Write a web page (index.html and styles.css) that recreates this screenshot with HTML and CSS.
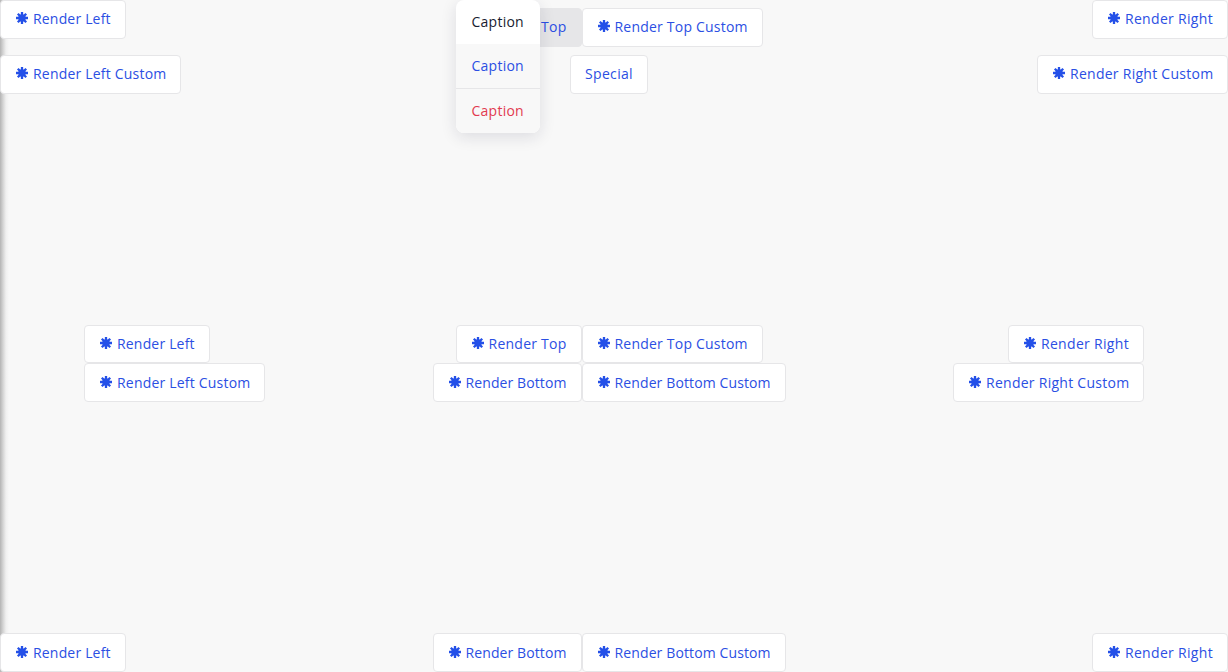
FILE: index.html
```
<!DOCTYPE html>
<html lang="en">
<head>
<meta charset="utf-8">
<title>Popover placement</title>
<link rel="stylesheet" href="styles.css">
</head>
<body>
<svg class="defs" aria-hidden="true">
  <symbol id="star" viewBox="0 0 12 12">
    <path d="M6 0v12M0 6h12M1.8 1.8l8.4 8.4M10.2 1.8l-8.4 8.4" fill="none" stroke="currentColor" stroke-width="2.3"/>
    <circle cx="6" cy="6" r="3.7" fill="currentColor"/>
  </symbol>
</svg>
<main class="page">
  <section class="row row-top">
    <div class="stack stack-spaced">
      <button class="btn left"><svg class="icon"><use href="#star"/></svg>Render Left</button>
      <button class="btn left-custom"><svg class="icon"><use href="#star"/></svg>Render Left Custom</button>
    </div>
    <div class="center">
      <div class="pair">
        <div class="anchor">
          <button class="btn btn-active top"><svg class="icon"><use href="#star"/></svg>Render Top</button>
          <div class="menu">
            <div class="item">Caption</div>
            <div class="item item-selected">Caption</div>
            <div class="item item-danger">Caption</div>
          </div>
        </div>
        <button class="btn top-custom"><svg class="icon"><use href="#star"/></svg>Render Top Custom</button>
      </div>
      <button class="btn special">Special</button>
    </div>
    <div class="stack stack-spaced stack-end">
      <button class="btn right"><svg class="icon"><use href="#star"/></svg>Render Right</button>
      <button class="btn right-custom"><svg class="icon"><use href="#star"/></svg>Render Right Custom</button>
    </div>
  </section>
  <section class="row row-inset">
    <div class="stack">
      <button class="btn left"><svg class="icon"><use href="#star"/></svg>Render Left</button>
      <button class="btn left-custom"><svg class="icon"><use href="#star"/></svg>Render Left Custom</button>
    </div>
    <div class="stack stack-center">
      <div class="pair">
        <button class="btn top"><svg class="icon"><use href="#star"/></svg>Render Top</button>
        <button class="btn top-custom"><svg class="icon"><use href="#star"/></svg>Render Top Custom</button>
      </div>
      <div class="pair">
        <button class="btn bottom"><svg class="icon"><use href="#star"/></svg>Render Bottom</button>
        <button class="btn bottom-custom"><svg class="icon"><use href="#star"/></svg>Render Bottom Custom</button>
      </div>
    </div>
    <div class="stack stack-end">
      <button class="btn right"><svg class="icon"><use href="#star"/></svg>Render Right</button>
      <button class="btn right-custom"><svg class="icon"><use href="#star"/></svg>Render Right Custom</button>
    </div>
  </section>
  <section class="row">
    <button class="btn left"><svg class="icon"><use href="#star"/></svg>Render Left</button>
    <div class="pair">
      <button class="btn bottom"><svg class="icon"><use href="#star"/></svg>Render Bottom</button>
      <button class="btn bottom-custom"><svg class="icon"><use href="#star"/></svg>Render Bottom Custom</button>
    </div>
    <button class="btn right"><svg class="icon"><use href="#star"/></svg>Render Right</button>
  </section>
</main>
</body>
</html>
```
FILE: styles.css
```
* { box-sizing: border-box; }
body {
  margin: 0;
  overflow: hidden;
  background: #f8f8f8;
  font: 14px/20px "Open Sans", "Noto Sans", sans-serif;
  letter-spacing: 0.25px;
  color: #171c30;
}
.defs { display: none; }
.page {
  display: flex;
  flex-direction: column;
  justify-content: space-between;
  height: 672px;
  background: linear-gradient(90deg, #b4b4b4 0, #d4d4d4 3px, #f0f0f0 6px, #f8f8f8 9px);
}
.row { display: flex; justify-content: space-between; align-items: flex-start; }
.row-top { height: 93.2px; }
.row-inset { padding: 0 84px; }
.stack { display: flex; flex-direction: column; align-items: flex-start; }
.stack-spaced { gap: 15.6px; }
.stack-end { align-items: flex-end; }
.stack-center { align-items: center; }
.center { display: flex; flex-direction: column; align-items: center; gap: 7.6px; padding-top: 8px; }
.pair { display: flex; }
.anchor { position: relative; }
.btn {
  display: flex;
  align-items: flex-start;
  height: 38.6px;
  padding: 8.4px 0 0 14px;
  border: 1px solid #e6e6e8;
  border-radius: 4px;
  background: #fff;
  color: #2b4fe3;
  font: inherit;
  letter-spacing: inherit;
  white-space: nowrap;
}
.row-top .btn { height: 39px; }
.left { width: 126px; letter-spacing: 0.18px; }
.left-custom { width: 181px; letter-spacing: 0.2px; }
.top { width: 126px; }
.top-custom { width: 181px; letter-spacing: 0.21px; }
.bottom { width: 149px; letter-spacing: 0.1px; }
.bottom-custom { width: 204px; letter-spacing: 0.12px; }
.right { width: 136px; letter-spacing: 0.31px; }
.right-custom { width: 191px; letter-spacing: 0.27px; }
.special { width: 78px; letter-spacing: 0.33px; }
.btn-active { background: #e6e6e8; }
.icon { width: 12px; height: 12px; margin: 3px 5px 0 1px; color: #2450e8; flex: none; }
.menu {
  position: absolute;
  left: 0;
  top: -8px;
  width: 84px;
  border-radius: 8px;
  overflow: hidden;
  background: #fff;
  box-shadow: 0 4px 16px rgba(23, 28, 60, .12);
}
.item { height: 44px; padding: 12px 16px; line-height: 20px; }
.item-selected { background: #f8f8f8; color: #2b4fe3; }
.item-danger { height: 45px; border-top: 1px solid #e6e6e8; background: #f8f8f8; color: #e23b50; }
```
